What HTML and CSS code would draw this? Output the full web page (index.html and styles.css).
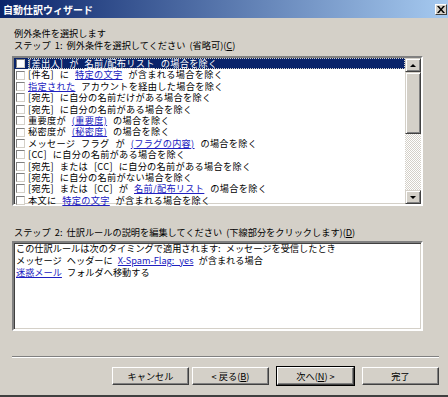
FILE: index.html
```html
<!DOCTYPE html>
<html lang="ja">
<head>
  <meta charset="UTF-8" />
  <title>自動仕訳ウィザード</title>
  <link rel="stylesheet" href="styles.css">
</head>
<body>

  <div class="window">
    <div class="titlebar">
      <span class="title">自動仕訳ウィザード</span>
      <span class="close-btn">
        <svg width="8" height="7" viewBox="0 0 8 7"><path d="M0 0h2l2 2.5 2-2.5h2l-3 3.5 3 3.5h-2l-2-2.5-2 2.5h-2l3-3.5z" fill="#000"/></svg>
      </span>
    </div>

    <div class="content">
      <div class="label">例外条件を選択します</div>
      <div class="label">ステップ 1: 例外条件を選択してください (省略可)(<u>C</u>)</div>

      <div class="listbox">
        <div class="rows">
          <div class="row selected"><span class="check"></span><span class="focus">[差出人] が <a>名前/配布リスト</a> の場合を除く</span></div>
          <div class="row"><span class="check"></span><span>[件名] に <a>特定の文字</a> が含まれる場合を除く</span></div>
          <div class="row"><span class="check"></span><span><a>指定された</a> アカウントを経由した場合を除く</span></div>
          <div class="row"><span class="check"></span><span>[宛先] に自分の名前だけがある場合を除く</span></div>
          <div class="row"><span class="check"></span><span>[宛先] に自分の名前がある場合を除く</span></div>
          <div class="row"><span class="check"></span><span>重要度が <a>(重要度)</a> の場合を除く</span></div>
          <div class="row"><span class="check"></span><span>秘密度が <a>(秘密度)</a> の場合を除く</span></div>
          <div class="row"><span class="check"></span><span>メッセージ フラグ が <a>(フラグの内容)</a> の場合を除く</span></div>
          <div class="row"><span class="check"></span><span>[CC] に自分の名前がある場合を除く</span></div>
          <div class="row"><span class="check"></span><span>[宛先] または [CC] に自分の名前がある場合を除く</span></div>
          <div class="row"><span class="check"></span><span>[宛先] に自分の名前がない場合を除く</span></div>
          <div class="row"><span class="check"></span><span>[宛先] または [CC] が <a>名前/配布リスト</a> の場合を除く</span></div>
          <div class="row"><span class="check"></span><span>本文に <a>特定の文字</a> が含まれる場合を除く</span></div>
        </div>
        <div class="scrollbar">
          <div class="sb-btn"><span class="arrow-up"></span></div>
          <div class="sb-thumb"></div>
          <div class="sb-track"></div>
          <div class="sb-btn"><span class="arrow-down"></span></div>
        </div>
      </div>

      <div class="label step2">ステップ 2: 仕訳ルールの説明を編集してください (下線部分をクリックします)(<u>D</u>)</div>

      <div class="descbox">
        <div class="line">この仕訳ルールは次のタイミングで適用されます: メッセージを受信したとき</div>
        <div class="line">メッセージ ヘッダーに <a>X-Spam-Flag: yes</a> が含まれる場合</div>
        <div class="line"><a>迷惑メール</a> フォルダへ移動する</div>
      </div>
    </div>

    <div class="separator"></div>

    <div class="buttons">
      <button>キャンセル</button>
      <button>&lt; 戻る(<u>B</u>)</button>
      <button class="default">次へ(<u>N</u>) &gt;</button>
      <button>完了</button>
    </div>
  </div>

</body>
</html>
```

FILE: styles.css
```css
body {
  margin: 0;
  padding: 0;
  font-family: "Noto Sans CJK JP", "DejaVu Sans", sans-serif;
  font-size: 9.2px;
  background: #d4d0c8;
}

.window {
  width: 448px;
  height: 397px;
  box-sizing: border-box;
  background: #d4d0c8;
  border-bottom: 2px solid #404040;
  display: flex;
  flex-direction: column;
}

.titlebar {
  height: 18px;
  display: flex;
  align-items: center;
  justify-content: space-between;
  padding: 0 1px 0 3px;
  background: linear-gradient(to right, #0a246a, #a6caf0);
}

.title {
  color: white;
  font-weight: bold;
  font-size: 10px;
}

.close-btn {
  width: 12px;
  height: 11px;
  box-sizing: border-box;
  background: #d4d0c8;
  border: 1px solid;
  border-color: #fff #404040 #404040 #fff;
  display: flex;
  align-items: center;
  justify-content: center;
}

.content {
  padding: 9px 25px 0 12px;
}

.label {
  line-height: 12px;
  padding-left: 2px;
  color: #000;
  word-spacing: 2px;
}

.step2 {
  margin-top: 20px;
}

.listbox {
  margin-top: 5px;
  height: 150px;
  box-sizing: border-box;
  background: white;
  border: 2px solid;
  border-color: #808080 #fff #fff #808080;
  box-shadow: inset 1px 1px 0 #404040, inset -1px -1px 0 #d4d0c8;
  display: flex;
}

.rows {
  flex: 1;
}

.row {
  height: 11.4px;
  line-height: 11.4px;
  display: flex;
  align-items: center;
  white-space: nowrap;
  color: #000;
  word-spacing: 3.5px;
  letter-spacing: 0.3px;
}

.row a, .descbox a {
  color: #2020c0;
  text-decoration: underline;
}

.check {
  width: 9px;
  height: 9px;
  box-sizing: border-box;
  background: white;
  border: 1px solid;
  border-color: #808080 #d4d0c8 #d4d0c8 #808080;
  margin: 0 3px 0 2px;
  flex-shrink: 0;
}

.selected {
  background: #0a246a;
  color: white;
}

.selected a {
  color: white;
}

.focus {
  flex: 1;
  outline: 1px dotted #d4d0c8;
  outline-offset: -1px;
}

.scrollbar {
  width: 16px;
  display: flex;
  flex-direction: column;
  background-color: #ece9e2;
  background-image: repeating-conic-gradient(#d4d0c8 0 25%, #fff 0 50%);
  background-size: 2px 2px;
}

.sb-btn {
  height: 14px;
  box-sizing: border-box;
  background: #d4d0c8;
  border: 1px solid;
  border-color: #d4d0c8 #404040 #404040 #d4d0c8;
  box-shadow: inset 1px 1px 0 #fff, inset -1px -1px 0 #808080;
  display: flex;
  align-items: center;
  justify-content: center;
}

.arrow-up {
  border-left: 3px solid transparent;
  border-right: 3px solid transparent;
  border-bottom: 3px solid #000;
}

.arrow-down {
  border-left: 3px solid transparent;
  border-right: 3px solid transparent;
  border-top: 3px solid #000;
}

.sb-thumb {
  height: 62px;
  box-sizing: border-box;
  background: #d4d0c8;
  border: 1px solid;
  border-color: #d4d0c8 #404040 #404040 #d4d0c8;
  box-shadow: inset 1px 1px 0 #fff, inset -1px -1px 0 #808080;
}

.sb-track {
  flex: 1;
}

.descbox {
  margin-top: 3px;
  height: 90px;
  box-sizing: border-box;
  background: white;
  border: 2px solid;
  border-color: #808080 #fff #fff #808080;
  box-shadow: inset 1px 1px 0 #404040, inset -1px -1px 0 #d4d0c8;
  padding: 0 0 0 2px;
}

.line {
  line-height: 11.8px;
  white-space: nowrap;
  word-spacing: 3px;
}

.separator {
  margin: 25px 9px 0 12px;
  height: 2px;
  box-sizing: border-box;
  border-top: 1px solid #808080;
  border-bottom: 1px solid #fff;
}

.buttons {
  display: flex;
  justify-content: flex-end;
  gap: 3px;
  margin-top: 9px;
  padding-right: 9px;
}

button {
  width: 77px;
  height: 18px;
  padding: 0;
  font-family: inherit;
  font-size: 9.2px;
  color: #000;
  background: #d4d0c8;
  border: 1px solid;
  border-color: #fff #404040 #404040 #fff;
  box-shadow: inset -1px -1px 0 #808080;
}

button.default {
  margin-left: 5px;
  margin-right: 5px;
  outline: 1px solid #000;
  outline-offset: 0;
}
```
